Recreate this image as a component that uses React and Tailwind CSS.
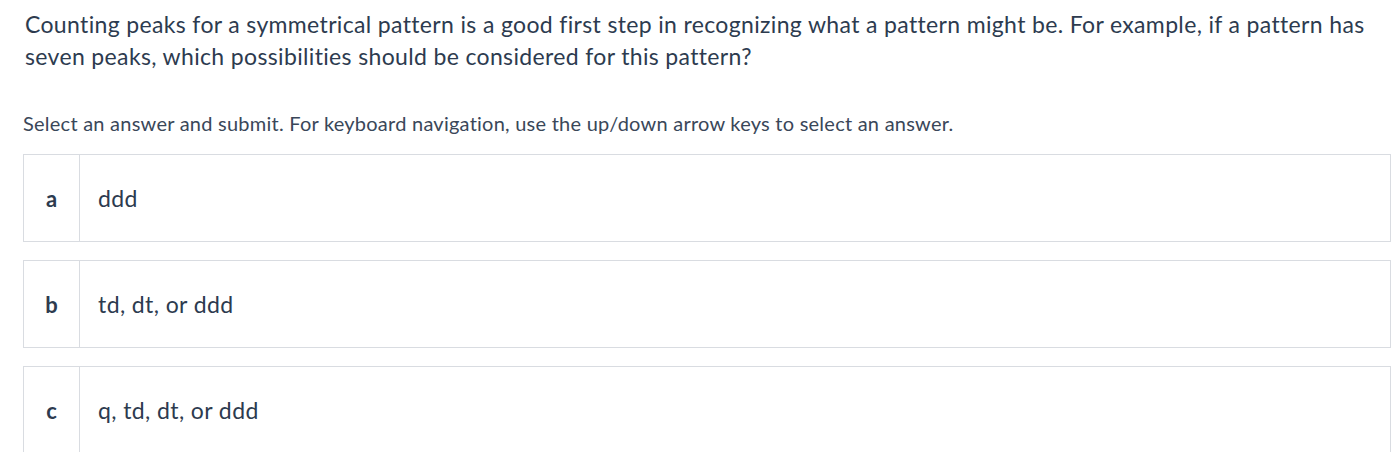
export default function App() {
  const options = [
    { l: "a", t: "ddd" },
    { l: "b", t: "td, dt, or ddd" },
    { l: "c", t: "q, td, dt, or ddd" },
  ];
  return (
    <div className="bg-white w-[1398px] h-[452px] overflow-hidden text-[#2d3b4f]" style={{ fontFamily: "Lato, 'Open Sans', sans-serif" }}>
      <div className="pl-[25px] pr-[20px] pt-[8px] text-[23px] leading-[32px] tracking-[0.35px]">
        Counting peaks for a symmetrical pattern is a good first step in recognizing what a pattern might be. For example, if a pattern has seven peaks, which possibilities should be considered for this pattern?
      </div>
      <div className="pl-[23px] mt-[38px] text-[20px] leading-[26px] tracking-[0.24px] text-[#3a4759]">
        Select an answer and submit. For keyboard navigation, use the up/down arrow keys to select an answer.
      </div>
      <div className="ml-[23px] w-[1368px] mt-[18px] flex flex-col gap-[18px]">
        {options.map((o) => (
          <div key={o.l} className="flex h-[88px] border border-[#d9dce1]">
            <div className="w-[56px] shrink-0 border-r border-[#d9dce1] flex items-center justify-center text-[22px] font-bold">
              {o.l}
            </div>
            <div className="flex items-center pl-[18px] text-[23px] tracking-[0.4px]">{o.t}</div>
          </div>
        ))}
      </div>
    </div>
  );
}
